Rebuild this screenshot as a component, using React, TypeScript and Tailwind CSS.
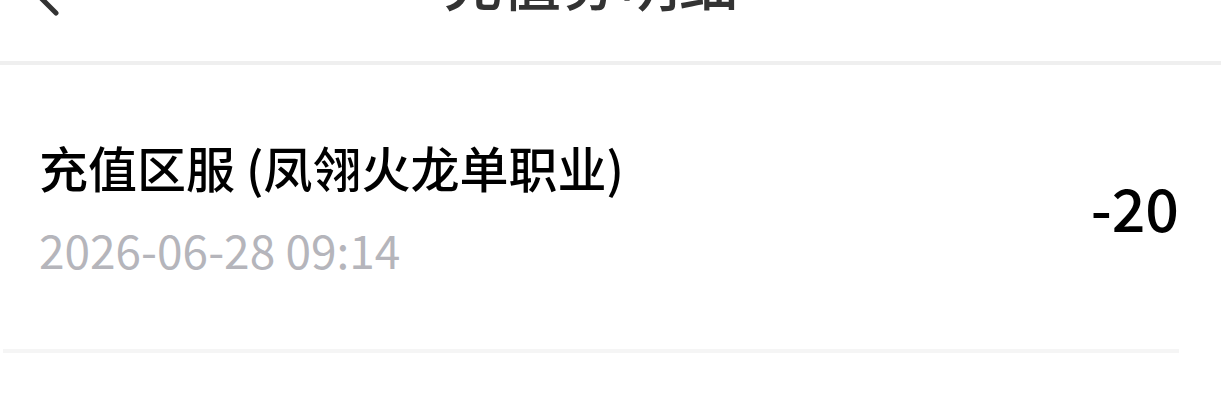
type RecordItem = {
  id: number;
  title: string;
  time: string;
  amount: number;
};

const RECORDS: RecordItem[] = [
  { id: 1, title: "充值区服 (凤翎火龙单职业)", time: "2026-06-28 09:14", amount: -20 },
];

function BackIcon() {
  return (
    <svg width="32" height="54" viewBox="0 0 32 54" fill="none" stroke="currentColor" strokeWidth="5" strokeLinecap="round" strokeLinejoin="round" aria-hidden="true">
      <path d="M26 50L3 27L26 4" />
    </svg>
  );
}

export default function App() {
  return (
    <div className="min-h-screen overflow-hidden bg-white font-['Noto_Sans_CJK_SC',sans-serif] text-black">
      <header className="grid h-[65px] grid-cols-[1fr_auto_1fr] content-end items-end border-b-4 border-[#efefef] pb-11 text-[#333333]">
        <button type="button" aria-label="返回" className="ml-[30px] w-8">
          <BackIcon />
        </button>
        <h1 className="mr-10 text-[59px] leading-[72px] font-medium">充值券明细</h1>
      </header>

      <ul className="pr-[42px] pl-[3px]">
        {RECORDS.map((record) => (
          <li key={record.id} className="flex items-center justify-between border-b-4 border-[#f5f5f5] py-[70px] pl-9">
            <div>
              <h2 className="text-[49px] leading-[64px] font-medium">{record.title}</h2>
              <time className="mt-5 block text-[46px] leading-[60px] text-[#b5b5bb]">{record.time}</time>
            </div>
            <span className="text-[59px] leading-[64px] font-medium">{record.amount}</span>
          </li>
        ))}
      </ul>
    </div>
  );
}
